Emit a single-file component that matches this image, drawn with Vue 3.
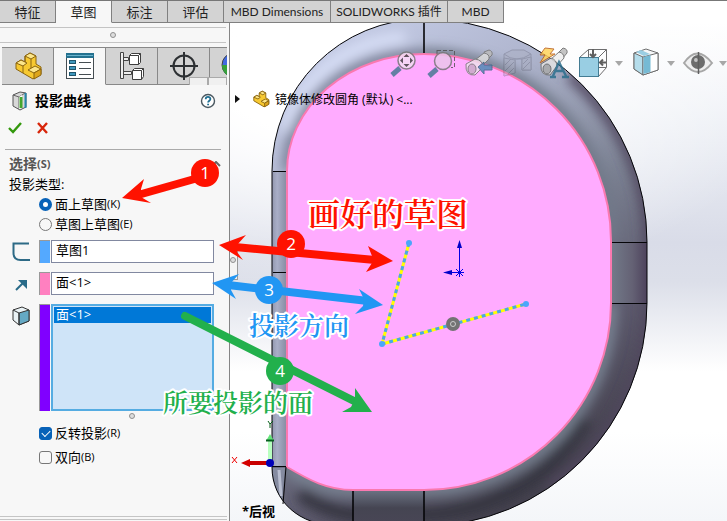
<script setup>
import { ref } from 'vue'

const tabs = [
  { label: '特征', w: 'short' },
  { label: '草图', w: 'short', active: true },
  { label: '标注', w: 'short' },
  { label: '评估', w: 'short' },
  { label: 'MBD Dimensions', w: 'mid' },
  { label: 'SOLIDWORKS 插件', w: 'long' },
  { label: 'MBD', w: 'short' }
]
const type = ref('face')
const reverse = ref(true)
const both = ref(false)
const sketch = ref('草图1')
const direction = ref('面<1>')
</script>

<template>
  <div class="app">
    <nav class="tabs">
      <button v-for="t in tabs" :key="t.label" class="tab" :class="[t.w, { active: t.active }]">{{ t.label }}</button>
    </nav>

    <div class="main">
      <aside class="panel">
        <div class="grip"><i class="dot"></i></div>
        <div class="modes">
          <button class="mode" aria-label="特征树">
            <svg width="30" height="30" viewBox="0 0 30 30"><g stroke="#8a6410" stroke-width="1" stroke-linejoin="round"><path d="M3 12 8 9 12 11V5l5-3 6 3v8l5 3v7l-8 5L3 18Z" fill="#f7c931" /><path d="M12 5 17 2l6 3-5 3ZM3 12 8 9l6 3-4 3ZM15 19l7-4 6 3-7 4Z" fill="#fce68a" /><path d="m21 22 7-4v6l-7 4Z" fill="#dda51b" /><path d="M12 5v6M18 8v9M10 15v7" fill="none" /></g></svg>
          </button>
          <button class="mode active" aria-label="属性">
            <svg width="30" height="30" viewBox="0 0 30 30"><rect x="1.500" y="2.500" width="27" height="25" fill="#fff" stroke="#454d52" /><path d="M1 2h28v5H1z" fill="#24718f" /><path d="M2 4.500h26" stroke="#69b3cc" /><g fill="#3e97bd" stroke="#20566d"><rect x="4.500" y="9.500" width="6" height="3" /><rect x="4.500" y="15.500" width="6" height="3" /><rect x="4.500" y="21.500" width="6" height="3" /></g><path d="M14 11.500h12M14 17.500h12M14 23.500h12" stroke="#454d52" /></svg>
          </button>
          <button class="mode" aria-label="配置">
            <svg width="30" height="30" viewBox="0 0 30 30"><path d="M3.500 1.500h3v26h-3zM6.500 6.500h5v3h-5zM6.500 20.500h8v3h-8z" fill="#eee" stroke="#444" /><g fill="#fff" stroke="#3e3e3e"><path d="m12.500 4.500 2-2h9v9l-2 2h-9z" /><path d="m15.500 19.500 2-2h9v8l-2 3h-9z" /><path d="M12.500 4.500h9v9m0-9 2-2M15.500 19.500h9v9m0-9 2-2" fill="none" /></g></svg>
          </button>
          <button class="mode" aria-label="尺寸专家">
            <svg width="30" height="30" viewBox="0 0 30 30"><g fill="none" stroke="#2d3033" stroke-width="2"><circle cx="15" cy="15" r="10.500" /><path d="M15 1v28M1 15h28" /></g></svg>
          </button>
          <button class="mode last" aria-label="外观">
            <svg width="30" height="30" viewBox="0 0 30 30"><circle cx="18" cy="14" r="12" fill="#4169e1" stroke="#444" /><path d="M6 14h12v12C10 26 6 20 6 14Z" fill="#36a13a" /></svg>
          </button>
          <div class="scroll"><button aria-label="向左"></button><button aria-label="向右"></button></div>
        </div>

        <header class="title">
          <svg width="18" height="20" viewBox="0 0 18 20"><path d="M2 4 9 1l6 1v14l-6 3-7-4Z" fill="#d8d8d8" stroke="#555" /><path d="m2 4 6 2v12M8 6l6-4" fill="none" stroke="#666" /><path d="M8 6l3-2v13l-3 1z" fill="#fff" /><path d="M10 6v11" stroke="#45a62d" stroke-width="3" /><path d="M14.500 2v15" stroke="#2686ac" stroke-width="2" /></svg>
          <h1>投影曲线</h1>
          <button class="help" aria-label="帮助"><svg width="16" height="16" viewBox="0 0 16 16"><circle cx="8" cy="8" r="6.500" fill="#fff" stroke="#4a5860" stroke-width="1.400" /><path d="M5.700 6.200C5.700 3.200 10.400 3.200 10.400 6c0 1.700-2.300 1.800-2.300 3.600M8.100 10.800v1.500" fill="none" stroke="#1f6e91" stroke-width="1.800" /></svg></button>
        </header>
        <div class="confirm">
          <button aria-label="确定"><svg width="16" height="14" viewBox="0 0 16 14"><path d="m2 7 4 4 8-9" fill="none" stroke="#33980c" stroke-width="2.400" /></svg></button>
          <button aria-label="取消"><svg width="14" height="14" viewBox="0 0 14 14"><path d="m1 2 9 10M10 2 1 12" fill="none" stroke="#d8260b" stroke-width="2.400" /></svg></button>
        </div>

        <section class="group">
          <h2>选择<small>(S)</small><svg width="10" height="6" viewBox="0 0 10 6"><path d="m1 5 4-4 4 4" fill="none" stroke="#666" stroke-width="2" /></svg></h2>
          <p class="caption">投影类型:</p>
          <label class="option"><input v-model="type" type="radio" name="type" value="face" />面上草图<small>(K)</small></label>
          <label class="option"><input v-model="type" type="radio" name="type" value="sketch" />草图上草图<small>(E)</small></label>

          <div class="field">
            <svg width="20" height="20" viewBox="0 0 20 20"><path d="M18 1.500H2.500V11q0 7 7 7H19" fill="none" stroke="#2d6a86" stroke-width="2" /></svg>
            <i class="swatch sky"></i><input v-model="sketch" type="text" aria-label="要投影的草图" />
          </div>
          <div class="field">
            <svg width="20" height="20" viewBox="0 0 20 20"><path d="M5 16 12 9" stroke="#286a88" stroke-width="2" /><path d="M7 6h9v9Z" fill="#286a88" /></svg>
            <i class="swatch pink"></i><input v-model="direction" type="text" aria-label="投影方向" />
          </div>
          <div class="field tall">
            <svg width="20" height="22" viewBox="0 0 20 22"><g stroke="#333" stroke-linejoin="round"><path d="m2 6 9-3 7 3v11l-10 4-6-5Z" fill="#e9f2f5" /><path d="m8 9 10-3v11l-10 4Z" fill="#65a9c4" /><path d="m2 6 6 3v12" fill="none" /></g></svg>
            <i class="swatch violet"></i>
            <ul class="list" role="listbox" aria-label="投影面"><li role="option" aria-selected="true">面&lt;1&gt;</li></ul>
          </div>
          <div class="sizer"><i class="dot"></i></div>
          <label class="option check"><input v-model="reverse" type="checkbox" />反转投影<small>(R)</small></label>
          <label class="option check"><input v-model="both" type="checkbox" />双向<small>(B)</small></label>
        </section>
        <div class="foot"></div>
      </aside>

      <main class="view">
        <svg class="model" viewBox="230 23 497 498" preserveAspectRatio="xMinYMin slice">
          <defs>
            <linearGradient id="rim" gradientUnits="userSpaceOnUse" x1="290" y1="60" x2="560" y2="470">
              <stop offset="0" stop-color="#c5cce6" /><stop offset=".25" stop-color="#b0b6cf" /><stop offset=".55" stop-color="#7b8192" /><stop offset=".8" stop-color="#5b586b" /><stop offset="1" stop-color="#45424f" />
            </linearGradient>
            <linearGradient id="side" x1="0" x2="1"><stop offset="0" stop-color="#9297ae" /><stop offset=".35" stop-color="#a9aec7" /><stop offset="1" stop-color="#858aa1" /></linearGradient>
            <linearGradient id="east" x1="0" x2="1"><stop offset="0" stop-color="#737b8a" /><stop offset=".6" stop-color="#646174" /><stop offset="1" stop-color="#4d425c" /></linearGradient>
            <linearGradient id="south" x1="0" y1="0" x2="0" y2="1"><stop offset="0" stop-color="#6c7384" /><stop offset=".5" stop-color="#454552" /><stop offset="1" stop-color="#494656" /></linearGradient>
            <filter id="soft" x="-20%" y="-20%" width="140%" height="140%"><feGaussianBlur stdDeviation="6" /></filter>
            <clipPath id="body"><path d="M272 171A152 152 0 0 1 424 19A223 223 0 0 1 647 242V303A223 223 0 0 1 424 526H340C298 526 272 500 272 467Z" /></clipPath>
          </defs>
          <g clip-path="url(#body)">
            <path d="M260 10h400v530H260z" fill="url(#rim)" />
            <g fill="none" filter="url(#soft)">
              <path d="M287 171C289 100 350 54 424 54" stroke="#6c7187" stroke-width="9" />
              <path d="M285 130C300 80 345 42 405 37" stroke="#dce3fa" stroke-width="9" />
              <path d="M424 54A187 187 0 0 1 611 241" stroke="#707888" stroke-width="12" />
              <path d="M570 75A223 223 0 0 1 649 242V303A223 223 0 0 1 550 488" stroke="#51465f" stroke-width="11" />
              <path d="M611 303A187 187 0 0 1 424 490H353Q320 490 287 467" stroke="#788292" stroke-width="14" />
              <path d="M586 420Q530 510 424 515H353Q320 510 300 493" stroke="#35343f" stroke-width="14" />
            </g>
            <path d="M287 171V467H272V171Z" fill="url(#side)" />
            <path d="M611 242h36v61h-36z" fill="url(#east)" />
            <path d="M353 490h71v36h-71z" fill="url(#south)" />
            <path d="M272 468v20l10 16 3-36Z" fill="#858ba0" />
            <path d="M279 470l2 26" stroke="#b9bed0" stroke-width="3" />
          </g>
          <path d="M287 171A137 117 0 0 1 424 54A187 187 0 0 1 611 241V303A187 187 0 0 1 424 490H353C327 490 309 480 287 467Z" fill="#ffabff" stroke="#fa79b0" stroke-width="2" />
          <g fill="none" stroke="#050508">
            <path d="M272 171A152 152 0 0 1 424 19A223 223 0 0 1 647 242V303A223 223 0 0 1 424 526H340C298 526 272 500 272 467Z" />
            <path d="M273 171.500h13M273 272.500h13M272 466.500h14M286 467l-3 37M612 242.500h35M612 303.500h35" />
            <path d="M424 20v33M353 491v32M424 491v32" stroke-width="2" stroke-opacity=".8" />
          </g>

          <g fill="none" stroke-width="3"><path d="M409 243 382 344 526 304" stroke="#ff0" /><path d="M409 243 382 344 526 304" stroke="#4aa6e8" stroke-dasharray="4 4" /></g>
          <g fill="#4ba6fa"><circle cx="409" cy="243" r="3" /><circle cx="382" cy="344" r="3" /><circle cx="526" cy="304" r="3" /></g>
          <circle cx="453" cy="324" r="7" fill="#737373" /><circle cx="453" cy="324" r="2.500" fill="none" stroke="#ccc" />
          <g stroke="#0000e6" fill="#0000c8"><path d="M459.500 272V246M459 272.500H447M456 269l7 7M463 269l-7 7M455 272.500h9M459.500 268v9" /><path d="M457 248l2.500-8 2.500 8ZM452 270v5l-9-2.500Z" stroke="none" /></g>

          <g>
            <path d="M246 463h24" stroke="#c80000" stroke-width="4" /><path d="m241 463 9-4v8Z" fill="#d40000" />
            <path d="M270 439v21" stroke="#b8ffc0" stroke-width="4" /><path d="m266 441 4-7 4 7Z" fill="#62e578" /><path d="M266 440.500h8" stroke="#075f20" stroke-width="2" />
            <circle cx="270" cy="463" r="4" fill="#0000b8" />
            <path d="m232 457 5 6M237 457l-5 6" stroke="#e00" /><path d="m268 421 2 3 3-3M270 424v4" fill="none" stroke="#08601b" />
          </g>
        </svg>

        <div class="hud">
          <button aria-label="整屏显示全图"><svg viewBox="388 46 30 32"><path d="m399 67-8 7" stroke="#4a7895" stroke-width="5" /><circle cx="405.500" cy="59.500" r="8.500" fill="#f5dcf5" stroke="#777" stroke-width="1.500" /><path d="m405.500 53 3 3h-6zM405.500 66l3-3h-6zM399 59.500l3-3v6zM412 59.500l-3-3v6z" fill="#444" /></svg></button>
          <button aria-label="局部放大"><svg viewBox="426 46 30 32"><path d="M436 49.500h17.500v17H450M436 49v4" fill="none" stroke="#555" stroke-dasharray="4 2" /><path d="m436 68-8 7" stroke="#4a7895" stroke-width="5" /><circle cx="442" cy="60" r="8.500" fill="#eac5ea" stroke="#777" stroke-width="1.500" /></svg></button>
          <button aria-label="上一视图"><svg viewBox="464 47 30 32"><g stroke="#777" stroke-linejoin="round"><path d="m483 52 5-2q4 1 3 5l-5 5z" fill="#bbb" /><path d="m474 60 9-7q6 1 5 6l-8 8z" fill="#ddd" /><path d="m465 64 9-5q8 1 8 8l-8 8q-10 1-9-11z" fill="#eee0ed" /><ellipse cx="471" cy="69" rx="4" ry="5" fill="#c9abc8" /></g><path d="m477 67 6-5v3h8v5h-8v4z" fill="#5089b5" stroke="#3e6688" /></svg></button>
          <button aria-label="剖面视图"><svg viewBox="502 47 30 32" opacity=".4"><g fill="#a7aabb" stroke="#5f6071"><path d="m503 54 8-4h12l7 4v16h-9V59h-7v14l-11 3z" /><path d="m503 58 11 2v13l-11 3zM521 59l9-2v13h-9z" /><path d="m504 65 6-6M504 71l9-9M507 74l6-6M522 64l5-5M522 69l7-7" /><path d="M503 54q12 10 27 0" fill="none" /></g></svg></button>
          <button aria-label="动态注解视图"><svg viewBox="541 47 30 32"><g stroke="#666" stroke-linejoin="round"><path d="m559 52 4-4q5 1 4 5l-5 6z" fill="#bbb" /><path d="m550 60 9-8q5 1 5 6l-8 9z" fill="#eee" /><path d="m541 64 10-6q6 2 6 8l-7 9q-10 1-9-11z" fill="#e4e4e4" /><ellipse cx="547" cy="69" rx="4" ry="5" fill="#aaa" /></g><path d="m545 48 9 1-4 5h5l-15 9 5-8h-5z" fill="#ffd35b" stroke="#b95d18" /><g fill="none" stroke="#2d708e" stroke-width="2.400"><path d="m553 76 6-14 7 14M555 71h9M550 77h6M562 77h7" /></g></svg></button>
          <button aria-label="视图定向"><svg viewBox="578 47 30 32"><g fill="none" stroke="#555"><path d="m578.500 57.500 9-8h18v18l-8 9M587.500 49.500v8M605.500 49.500l-8 8M597 67.500h8" /><rect x="578.500" y="57.500" width="19" height="19" fill="#88c6df" stroke="#246681" /></g><path d="M592 49v8m-3-3 3 3 3-3M605 62.500h-6m3-3-3 3 3 3" fill="none" stroke="#444" stroke-width="2" /></svg></button>
          <button class="more" aria-label="更多视图"><svg viewBox="0 0 8 5"><path d="M0 0h8L4 5Z" fill="#999" /></svg></button>
          <button aria-label="显示样式"><svg viewBox="630 47 30 32"><g stroke="#555" stroke-linejoin="round"><path d="m633 53 12-4 12 4v17l-15 5-9-6z" fill="#f6f7f8" /><path d="m633 53 9 4v18l-9-6z" fill="#a9d8e9" /><path d="m642 57 15-4v17l-15 5z" fill="#fff" /></g><path d="m642.500 57 7-2v17l-7 2z" fill="#5fafce" /><path d="m635 52 5-2 9 4-6 2z" fill="#8bc7df" /></svg></button>
          <button class="more" aria-label="更多样式"><svg viewBox="0 0 8 5"><path d="M0 0h8L4 5Z" fill="#999" /></svg></button>
          <button aria-label="隐藏所有类型"><svg viewBox="683 47 30 32"><path d="M684 63q13-19 28 0-14 18-28 0Z" fill="#eee" stroke="#999" stroke-width="2" /><circle cx="698" cy="62" r="7" fill="#555" /><circle cx="696" cy="60" r="2" fill="#bbb" /><path d="M698.500 52v22" stroke="#444" stroke-width="1.500" /></svg></button>
          <button class="more" aria-label="更多类型"><svg viewBox="0 0 8 5"><path d="M0 0h8L4 5Z" fill="#999" /></svg></button>
        </div>

        <div class="tree">
          <svg width="5" height="8" viewBox="0 0 5 8"><path d="M0 0v8l5-4Z" fill="#111" /></svg>
          <svg class="part" width="18" height="18" viewBox="0 0 30 30"><g stroke="#8a6410" stroke-width="1.500" stroke-linejoin="round"><path d="M3 12 8 9 12 11V5l5-3 6 3v8l5 3v7l-8 5L3 18Z" fill="#f7c931" /><path d="M12 5 17 2l6 3-5 3ZM3 12 8 9l6 3-4 3ZM15 19l7-4 6 3-7 4Z" fill="#fce68a" /><path d="m21 22 7-4v6l-7 4Z" fill="#dda51b" /></g></svg>
          <span>镜像体修改圆角 (默认) &lt;...</span>
        </div>
        <div class="viewname">*后视</div>
        <i class="handle"><i class="dot"></i></i>
      </main>
    </div>

    <svg class="notes" viewBox="0 0 727 521" preserveAspectRatio="xMinYMin meet">
      <g fill="#ff1200">
        <path d="m138 195 60-17" stroke="#ff1200" stroke-width="8" />
        <path d="m122 198 22-19-3 10v8l10 6Z" /><circle cx="205" cy="173" r="14" />
        <path d="M235 247 375 260" stroke="#ff1200" stroke-width="8" />
        <path d="m219 245 27-10-9 10v7l6 8ZM393 261l-25-15 4 10v7l-6 9Z" /><circle cx="291" cy="244" r="14" />
      </g>
      <g fill="#2196f3">
        <path d="M228 285 368 301" stroke="#2196f3" stroke-width="8" />
        <path d="m212 283 27-9-8 9v7l5 9ZM383 305l-24-16 5 10-1 7-8 8Z" /><circle cx="269" cy="290" r="14" />
      </g>
      <g fill="#22b04c"><path d="M185 316 358 403" stroke="#22b04c" stroke-width="8" stroke-linecap="round" /><path d="m372 412-17-24v11l-4 8-9 5Z" /><circle cx="280" cy="371" r="14" /></g>
      <g class="num"><text x="205" y="179">1</text><text x="291" y="250">2</text><text x="269" y="296">3</text><text x="280" y="377">4</text></g>
      <g class="memo">
        <text class="big" x="308" y="226" fill="#ff1200">画好的草图</text>
        <text x="249" y="335" fill="#2196f3">投影方向</text>
        <text x="163" y="412" fill="#22b04c">所要投影的面</text>
      </g>
    </svg>
  </div>
</template>

<style>
body { margin: 0; }
</style>

<style scoped>
* { box-sizing: border-box; }
.app { position: relative; display: flex; flex-direction: column; min-height: 100vh; overflow: hidden; background: #fff; color: #000; font: 13px/18px "Open Sans", "Noto Sans CJK SC", sans-serif; }
button { margin: 0; padding: 0; border: 0; background: none; font: inherit; color: inherit; }
svg { display: block; flex: none; }
h1, h2, p, ul { margin: 0; padding: 0; }
small { font-size: 11px; }

.tabs { display: flex; height: 23px; border-top: 1px solid #777; }
.tab { height: 22px; border-right: 1px solid #808080; border-bottom: 1px solid #808080; background: #d3d3d3; color: #222; font: 12px/20px Lato, "Noto Sans CJK SC", sans-serif; white-space: nowrap; }
.tab.active { background: #f7f7f7; border-bottom-color: #f7f7f7; }
.short { width: 56px; font-size: 13px; }
.mid { width: 107px; }
.long { width: 117px; }
.tab.short:last-child { font-size: 12px; }

.main { display: flex; flex: 1; }
.panel { display: flex; flex-direction: column; width: 230px; flex: none; background: #f7f7f7; border-right: 1px solid #858585; }
.dot { display: block; width: 6px; height: 6px; border: 1px solid #8f8f8f; border-radius: 50%; background: #ddd; }
.grip { display: flex; align-items: center; justify-content: center; height: 16px; margin: 4px 3px 0 0; border-top: 1px solid #c4c4c4; border-bottom: 1px solid #c4c4c4; }
.modes { position: relative; display: flex; height: 38px; margin: 4px 2px 0; overflow: hidden; }
.mode { display: flex; align-items: center; justify-content: center; width: 52px; flex: none; background: #d3d3d3; border: solid #888; border-width: 1px 1px 1px 0; }
.mode.active { background: #f7f7f7; border-bottom-color: #f7f7f7; }
.mode.last { justify-content: flex-start; padding-left: 6px; }
.scroll { position: absolute; right: 0; bottom: 0; display: flex; height: 8px; }
.scroll button { width: 19px; border: 1px solid #aaa; border-bottom: 0; background: #f0f0f0; }

.title { display: flex; align-items: center; gap: 6px; height: 24px; margin-top: 4px; padding: 0 13px 0 11px; }
.title h1 { flex: 1; font-size: 14px; line-height: 20px; font-weight: 700; }
.confirm { display: flex; gap: 14px; height: 30px; align-items: center; padding-left: 7px; }
.group { margin: 6px 8px 0 5px; padding: 4px 0 0 4px; border-top: 1px solid #aaa; }
h2 { display: flex; align-items: center; height: 20px; color: #555; font-size: 14px; font-weight: 700; }
h2 svg { margin-left: auto; }
.caption { height: 20px; line-height: 20px; }
.option { display: flex; align-items: center; height: 20px; margin-left: 30px; }
.option input { appearance: none; width: 13px; height: 13px; margin: 0 3px 0 0; border: 1px solid #777; background: #f7f7f7; flex: none; }
.option input[type="radio"] { border-radius: 50%; }
.option input[type="radio"]:checked { border: 4px solid #0862b8; background: #fff; }
.option input[type="checkbox"] { border-radius: 3px; }
.option input[type="checkbox"]:checked { border-color: #0862b8; background: #0862b8; }
.check { position: relative; height: 24px; }
.check input:checked::after { content: ""; display: block; width: 7px; height: 4px; margin: 2px; border: solid #fff; border-width: 0 0 1px 1px; transform: rotate(-45deg); }

.field { display: flex; align-items: center; height: 23px; margin: 0 7px 9px 2px; }
.option + .field { margin-top: 6px; }
.swatch { align-self: stretch; width: 11px; margin: 0 1px 0 8px; border-top: 1px solid #999; border-left: 1px solid #999; }
.sky { background: #54a9ff; }
.pink { background: #ff80c0; }
.violet { background: #8000ff; }
.field input { flex: 1; min-width: 0; height: 23px; padding: 0 4px 5px; border: 1px solid #8188a0; background: #fff; font: inherit; }
.tall { align-items: flex-start; height: 107px; margin-bottom: 0; }
.list { flex: 1; align-self: stretch; padding: 1px; border: 2px solid #55ace2; background: #cfe4f8; list-style: none; }
.list li { height: 16px; padding-left: 2px; line-height: 14px; background: #0078d7; color: #fff; }
.sizer { display: flex; align-items: center; justify-content: center; height: 10px; margin-left: 34px; }
.foot { height: 4px; margin: auto 2px 1px 0; border: solid #c4c4c4; border-width: 1px 0; }

.view { position: relative; flex: 1; overflow: hidden; background: radial-gradient(ellipse 90% 45% at 25% 10%, #fff 30%, #fff0 100%), linear-gradient(#fff 0, #eceff5 20%, #d9dce8 44%, #dcdfe9 52%, #fff 70%, #fff 82%, #f4f6f9 100%); }
.model { position: absolute; inset: 0; width: 100%; height: 100%; }
.hud { position: relative; display: flex; align-items: center; justify-content: flex-end; gap: 8px; height: 32px; margin-top: 24px; opacity: .85; }
.hud button { width: 30px; flex: none; }
.hud svg { overflow: visible; }
.hud .more { width: 8px; margin-left: -2px; }
.tree { position: relative; display: flex; align-items: center; height: 18px; margin-top: 11px; padding-left: 5px; font-size: 12px; }
.tree span { padding-top: 2px; }
.tree .part { margin: 0 5px 0 12px; }
.viewname { position: absolute; left: 12px; bottom: 1px; font-size: 13px; font-weight: 700; }
.handle { position: absolute; left: 0; top: 221px; display: flex; align-items: center; width: 8px; height: 36px; padding-bottom: 4px; border: solid #999; border-width: 1px 1px 1px 0; background: #f4f4f4; }

.notes { position: absolute; left: 0; top: 0; width: 100%; pointer-events: none; }
.num { fill: #fff; font: 17px "Open Sans", sans-serif; text-anchor: middle; }
.memo { font: 600 25px "Noto Serif CJK SC", "Noto Sans CJK SC", serif; stroke: #fff; stroke-width: 4px; stroke-linejoin: round; paint-order: stroke; }
.big { font-size: 32px; }
</style>
